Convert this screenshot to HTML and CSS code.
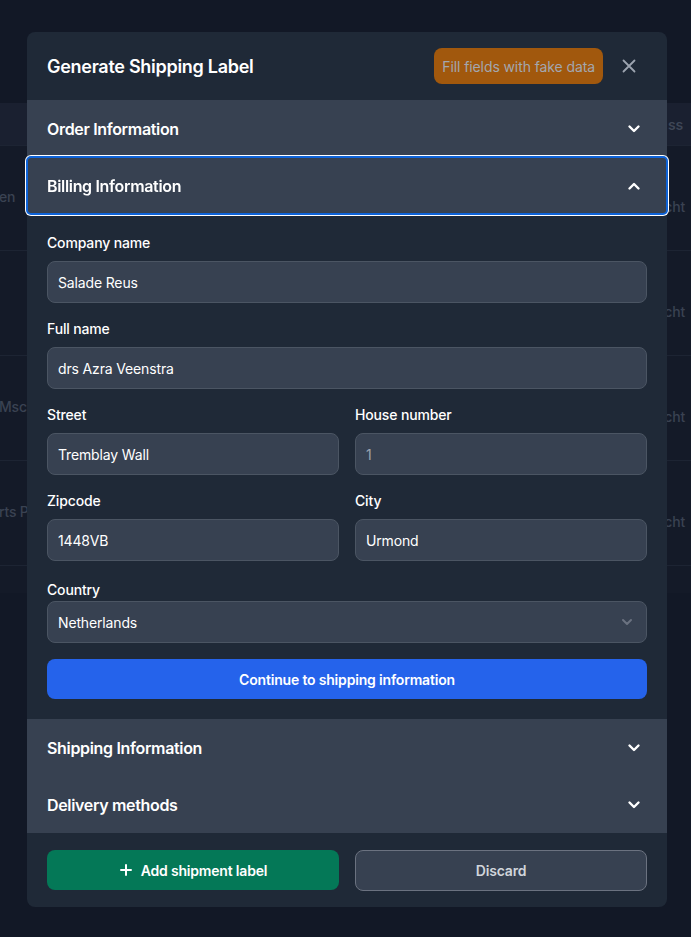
FILE: index.html
```html
<!DOCTYPE html>
<html lang="en">
<head>
<meta charset="utf-8">
<title>Generate Shipping Label</title>
<link rel="stylesheet" href="styles.css">
</head>
<body>
<div class="page">
  <div class="table">
    <div class="thead">
      <span class="cell-left"></span>
      <span class="cell-right head">ss</span>
    </div>
    <div class="trow"><span class="cell-left">en</span><span class="cell-right">cht</span></div>
    <div class="trow"><span class="cell-left"></span><span class="cell-right">cht</span></div>
    <div class="trow"><span class="cell-left">Msc</span><span class="cell-right">cht</span></div>
    <div class="trow"><span class="cell-left">rts P</span><span class="cell-right">cht</span></div>
    <div class="tfoot"></div>
  </div>
</div>

<div class="overlay">
  <div class="modal">
    <div class="modal-header">
      <h1 class="modal-title">Generate Shipping Label</h1>
      <div class="header-actions">
        <button class="btn-fake">Fill fields with fake data</button>
        <button class="btn-close" aria-label="Close">
          <svg width="24" height="24" viewBox="0 0 24 24" fill="none" stroke="#9ca3af" stroke-width="1.8" stroke-linecap="round"><path d="M6.5 6.5l11 11M17.5 6.5l-11 11"/></svg>
        </button>
      </div>
    </div>

    <button class="acc-head">
      <span>Order Information</span>
      <svg class="chev" width="20" height="20" viewBox="0 0 20 20" fill="none" stroke="#fff" stroke-width="2.4" stroke-linecap="round" stroke-linejoin="round"><path d="M5.5 7.5l4.5 4.5 4.5-4.5"/></svg>
    </button>
    <button class="acc-head focused">
      <span>Billing Information</span>
      <svg class="chev" width="20" height="20" viewBox="0 0 20 20" fill="none" stroke="#fff" stroke-width="2.4" stroke-linecap="round" stroke-linejoin="round"><path d="M5.5 12.5l4.5-4.5 4.5 4.5"/></svg>
    </button>

    <div class="acc-body">
      <div class="field">
        <label class="label">Company name</label>
        <div class="input">Salade Reus</div>
      </div>
      <div class="field">
        <label class="label">Full name</label>
        <div class="input">drs Azra Veenstra</div>
      </div>
      <div class="row2">
        <div class="field">
          <label class="label">Street</label>
          <div class="input">Tremblay Wall</div>
        </div>
        <div class="field">
          <label class="label">House number</label>
          <div class="input placeholder">1</div>
        </div>
      </div>
      <div class="row2">
        <div class="field">
          <label class="label">Zipcode</label>
          <div class="input">1448VB</div>
        </div>
        <div class="field">
          <label class="label">City</label>
          <div class="input">Urmond</div>
        </div>
      </div>
      <div class="field country">
        <label class="label">Country</label>
        <div class="input select">
          <span>Netherlands</span>
          <svg width="16" height="16" viewBox="0 0 16 16" fill="none" stroke="#6b7280" stroke-width="2" stroke-linecap="round" stroke-linejoin="round"><path d="M4 6l4 4 4-4"/></svg>
        </div>
      </div>
      <button class="btn-primary">Continue to shipping information</button>
    </div>

    <button class="acc-head">
      <span>Shipping Information</span>
      <svg class="chev" width="20" height="20" viewBox="0 0 20 20" fill="none" stroke="#fff" stroke-width="2.4" stroke-linecap="round" stroke-linejoin="round"><path d="M5.5 7.5l4.5 4.5 4.5-4.5"/></svg>
    </button>
    <button class="acc-head">
      <span>Delivery methods</span>
      <svg class="chev" width="20" height="20" viewBox="0 0 20 20" fill="none" stroke="#fff" stroke-width="2.4" stroke-linecap="round" stroke-linejoin="round"><path d="M5.5 7.5l4.5 4.5 4.5-4.5"/></svg>
    </button>

    <div class="modal-footer">
      <button class="btn-green">
        <svg width="14" height="14" viewBox="0 0 14 14" fill="none" stroke="#fff" stroke-width="2" stroke-linecap="round"><path d="M7 2v10M2 7h10"/></svg>
        <span>Add shipment label</span>
      </button>
      <button class="btn-discard">Discard</button>
    </div>
  </div>
</div>
</body>
</html>
```

FILE: styles.css
```css
* { box-sizing: border-box; }

html, body {
  margin: 0;
  padding: 0;
  width: 691px;
  height: 937px;
  overflow: hidden;
}

body {
  background: #121826;
  font-family: Inter, "Noto Sans", "Liberation Sans", sans-serif;
  color: #fff;
  -webkit-font-smoothing: antialiased;
}

/* background page */
.page {
  padding-top: 103px;
}

.table {
  background: #141a28;
}

.thead {
  height: 42px;
  background: #1a2030;
  display: flex;
  align-items: center;
  justify-content: space-between;
  font-size: 14px;
  font-weight: 600;
}

.trow {
  height: 105px;
  border-top: 1px solid #1d2433;
  display: flex;
  justify-content: space-between;
  font-size: 14px;
  font-weight: 500;
  color: #3a4252;
}

.tfoot {
  height: 28px;
  border-top: 1px solid #1d2433;
}

.cell-left {
  margin-left: -1px;
  padding-top: 42px;
  white-space: nowrap;
  letter-spacing: -0.2px;
}

.cell-right {
  padding-top: 52px;
  padding-right: 6px;
  white-space: nowrap;
  text-align: right;
  letter-spacing: -0.2px;
}

.cell-right.head {
  padding-top: 0;
  padding-right: 8px;
  color: #3e4656;
}

/* overlay + modal */
.overlay {
  position: fixed;
  inset: 0;
  padding: 32px 0 0 27px;
}

.modal {
  width: 640px;
  background: #1f2937;
  border-radius: 8px;
}

.modal-header {
  height: 68px;
  padding: 0 26px 0 20px;
  display: flex;
  align-items: center;
  justify-content: space-between;
}

.modal-title {
  margin: 0;
  font-size: 18px;
  font-weight: 600;
  letter-spacing: -0.28px;
  color: #fff;
}

.header-actions {
  display: flex;
  align-items: center;
  gap: 14px;
}

button {
  font-family: inherit;
  border: none;
  cursor: pointer;
  padding: 0;
}

.btn-fake {
  height: 36px;
  padding: 0 8px;
  border-radius: 8px;
  background: #a1580d;
  color: #a3a7af;
  font-size: 14px;
  font-weight: 400;
  white-space: nowrap;
  letter-spacing: -0.1px;
}

.btn-close {
  width: 24px;
  height: 24px;
  background: transparent;
  display: flex;
  align-items: center;
  justify-content: center;
}

.acc-head {
  width: 100%;
  height: 57px;
  background: #374151;
  display: flex;
  align-items: center;
  justify-content: space-between;
  padding: 0 23px 0 20px;
  color: #fff;
  font-size: 16px;
  font-weight: 600;
  letter-spacing: -0.33px;
  text-align: left;
}

.acc-head.focused {
  border-radius: 4px;
  outline: 2px solid #0e63d8;
  outline-offset: -1px;
  box-shadow: 0 0 0 2px #ffffff;
  position: relative;
}

.chev { display: block; }

.acc-body {
  padding: 19px 20px 20px;
  display: flex;
  flex-direction: column;
  gap: 16px;
}

.field {
  display: flex;
  flex-direction: column;
  gap: 8px;
  min-width: 0;
}

.field.country {
  gap: 1px;
  margin-top: 3px;
}

.label {
  font-size: 14px;
  line-height: 20px;
  font-weight: 500;
  letter-spacing: -0.15px;
  color: #fff;
}

.input {
  height: 42px;
  background: #374151;
  border: 1px solid #4b5563;
  border-radius: 8px;
  padding: 0 10px;
  display: flex;
  align-items: center;
  font-size: 14px;
  letter-spacing: -0.15px;
  color: #fff;
}

.input.placeholder { color: #9ca3af; }

.input.select {
  justify-content: space-between;
  padding-right: 11px;
}

.row2 {
  display: grid;
  grid-template-columns: 1fr 1fr;
  gap: 16px;
}

.btn-primary {
  height: 40px;
  border-radius: 8px;
  background: #2563eb;
  color: #fff;
  font-size: 14px;
  font-weight: 600;
  letter-spacing: -0.18px;
}

.modal-footer {
  display: grid;
  grid-template-columns: 1fr 1fr;
  gap: 16px;
  padding: 17px 20px 16px;
}

.btn-green {
  height: 40px;
  border-radius: 8px;
  background: #047857;
  color: #fff;
  font-size: 14px;
  font-weight: 600;
  letter-spacing: -0.18px;
  display: flex;
  align-items: center;
  justify-content: center;
  gap: 8px;
}

.btn-discard {
  height: 41px;
  border-radius: 8px;
  background: #374151;
  border: 1px solid #6b7280;
  color: #d1d5db;
  font-size: 14px;
  font-weight: 600;
  letter-spacing: -0.18px;
}
```
